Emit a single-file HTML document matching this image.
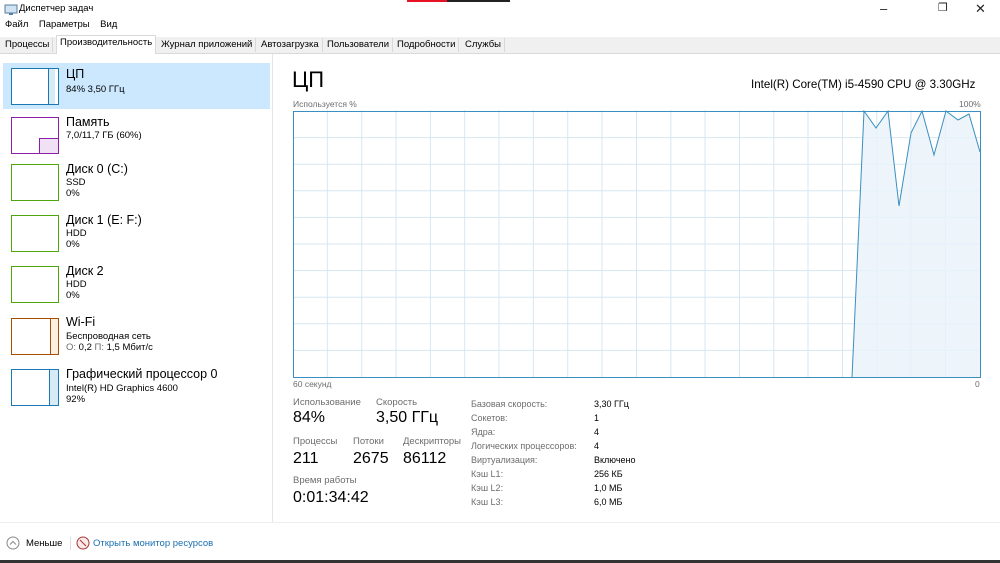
<!DOCTYPE html><html><head><meta charset="utf-8"><style>
body{margin:0;width:1000px;height:563px;overflow:hidden;background:#fff;font-family:"Segoe UI","Liberation Sans","DejaVu Sans",sans-serif;color:#000;position:relative}
.a{position:absolute;white-space:nowrap}
.s{font-size:9.5px}
.g{color:#6d6d6d}
.tab{position:absolute;top:38px;height:14px;font-size:9.5px;padding:0 3px;border-right:1px solid #d9d9d9;background:#f0f0f0;line-height:14px}
.th{position:absolute;left:11px;width:46px;height:35px;background:#fff}
.t1{font-size:12.5px}
</style></head><body>
<div class="a" style="left:407px;top:0;width:40px;height:2px;background:#e81123"></div>
<div class="a" style="left:447px;top:0;width:63px;height:2px;background:#222"></div>
<svg class="a" style="left:4px;top:4px" width="14" height="12"><rect x="1" y="1" width="12" height="8" fill="#cfe3f2" stroke="#5a7ea0"/><rect x="5" y="9" width="4" height="2" fill="#5a7ea0"/></svg>
<div class="a s" style="left:19px;top:3px">Диспетчер задач</div>
<div class="a s" style="left:5px;top:19px">Файл&nbsp;&nbsp;&nbsp;&nbsp;Параметры&nbsp;&nbsp;&nbsp;&nbsp;Вид</div>
<div class="a" style="left:880px;top:1px;font-size:13px;color:#222">&#8211;</div>
<div class="a" style="left:938px;top:1px;font-size:11px;color:#222">&#10064;</div>
<div class="a" style="left:975px;top:1px;font-size:13px;color:#222">&#10005;</div>
<div class="a" style="left:0;top:37px;width:1000px;height:16px;background:#f0f0f0;border-bottom:1px solid #d9d9d9"></div>
<div class="tab" style="left:2px">Процессы</div>
<div class="tab" style="left:56px;top:35px;height:18px;background:#fff;border:1px solid #d9d9d9;border-bottom:none">Производительность</div>
<div class="tab" style="left:158px">Журнал приложений</div>
<div class="tab" style="left:258px">Автозагрузка</div>
<div class="tab" style="left:324px">Пользователи</div>
<div class="tab" style="left:394px">Подробности</div>
<div class="tab" style="left:462px">Службы</div>
<div class="a" style="left:272px;top:54px;width:1px;height:468px;background:#e5e5e5"></div>
<div class="a" style="left:3px;top:63px;width:267px;height:46px;background:#cce8ff"></div>
<div class="th" style="top:68px;border:1px solid #1a79b5"><div class="a" style="right:3px;top:0;width:6px;height:35px;background:#d7ebf7;border-left:1px solid #1a79b5"></div></div>
<div class="a t1" style="left:66px;top:67px">ЦП</div><div class="a s" style="left:66px;top:84px">84% 3,50 ГГц</div>
<div class="th" style="top:117px;border:1px solid #8b1fa8"><div class="a" style="right:0;bottom:0;width:18px;height:14px;background:#f1e1f5;border-top:1px solid #8b1fa8;border-left:1px solid #8b1fa8"></div></div>
<div class="a t1" style="left:66px;top:115px">Память</div><div class="a s" style="left:66px;top:130px">7,0/11,7 ГБ (60%)</div>
<div class="th" style="top:164px;border:1px solid #4da60c"></div>
<div class="a t1" style="left:66px;top:162px">Диск 0 (C:)</div><div class="a s" style="left:66px;top:177px">SSD<br>0%</div>
<div class="th" style="top:215px;border:1px solid #4da60c"></div>
<div class="a t1" style="left:66px;top:213px">Диск 1 (E: F:)</div><div class="a s" style="left:66px;top:228px">HDD<br>0%</div>
<div class="th" style="top:266px;border:1px solid #4da60c"></div>
<div class="a t1" style="left:66px;top:264px">Диск 2</div><div class="a s" style="left:66px;top:279px">HDD<br>0%</div>
<div class="th" style="top:318px;border:1px solid #a74f01"><div class="a" style="right:0;top:0;width:7px;height:35px;background:#fbeee2;border-left:1px solid #a74f01"></div></div>
<div class="a t1" style="left:66px;top:315px">Wi-Fi</div><div class="a s" style="left:66px;top:331px">Беспроводная сеть<br><span class="g">О:</span> 0,2 <span class="g">П:</span> 1,5 Мбит/с</div>
<div class="th" style="top:369px;border:1px solid #1a79b5"><div class="a" style="right:0;top:0;width:8px;height:35px;background:#d7ebf7;border-left:1px solid #1a79b5"></div></div>
<div class="a t1" style="left:66px;top:367px">Графический процессор 0</div><div class="a s" style="left:66px;top:383px">Intel(R) HD Graphics 4600<br>92%</div>
<div class="a" style="left:292px;top:67px;font-size:22px">ЦП</div>
<div class="a" style="left:751px;top:78px;font-size:11.6px">Intel(R) Core(TM) i5-4590 CPU @ 3.30GHz</div>
<div class="a g" style="left:293px;top:99px;font-size:8.5px">Используется %</div>
<div class="a g" style="left:959px;top:99px;font-size:8.5px">100%</div>
<svg class="a" style="left:292px;top:110px" width="690" height="269">
<g stroke="#d6e7f1" stroke-width="1">
<path d="M35.3 0V268M69.7 0V268M104 0V268M138.4 0V268M172.7 0V268M207 0V268M241.4 0V268M275.7 0V268M310 0V268M344.5 0V268M378.8 0V268M413 0V268M447.5 0V268M481.8 0V268M516 0V268M550.5 0V268M584.8 0V268M619 0V268M653.5 0V268"/>
<path d="M1 27.6H688M1 54.2H688M1 80.8H688M1 107.4H688M1 134H688M1 160.6H688M1 187.2H688M1 213.8H688M1 240.4H688"/>
</g>
<path d="M560 268L572 1L584 18L596 1L607 96L619 23L630 1L642 45L654 1L666 10L677 4L688 42V268Z" fill="#e9f3fa" fill-opacity=".8"/>
<path d="M560 268L572 1L584 18L596 1L607 96L619 23L630 1L642 45L654 1L666 10L677 4L688 42" fill="none" stroke="#3a8fc0" stroke-width="1"/>
<rect x="1.5" y="1.5" width="687" height="266" fill="none" stroke="#3a8fc0"/>
</svg>
<div class="a g" style="left:293px;top:379px;font-size:8.5px">60 секунд</div>
<div class="a g" style="left:975px;top:379px;font-size:8.5px">0</div>
<div class="a g s" style="left:293px;top:397px">Использование</div>
<div class="a g s" style="left:376px;top:397px">Скорость</div>
<div class="a" style="left:293px;top:409px;font-size:16px">84%</div>
<div class="a" style="left:376px;top:409px;font-size:16px">3,50 ГГц</div>
<div class="a g s" style="left:293px;top:436px">Процессы</div>
<div class="a g s" style="left:353px;top:436px">Потоки</div>
<div class="a g s" style="left:403px;top:436px">Дескрипторы</div>
<div class="a" style="left:293px;top:450px;font-size:16px">211</div>
<div class="a" style="left:353px;top:450px;font-size:16px">2675</div>
<div class="a" style="left:403px;top:450px;font-size:16px">86112</div>
<div class="a g s" style="left:293px;top:475px">Время работы</div>
<div class="a" style="left:293px;top:489px;font-size:16px">0:01:34:42</div>
<div class="a g" style="left:471px;top:397px;font-size:9px;line-height:14px">Базовая скорость:<br>Сокетов:<br>Ядра:<br>Логических процессоров:<br>Виртуализация:<br>Кэш L1:<br>Кэш L2:<br>Кэш L3:</div>
<div class="a" style="left:594px;top:397px;font-size:9px;line-height:14px">3,30 ГГц<br>1<br>4<br>4<br>Включено<br>256 КБ<br>1,0 МБ<br>6,0 МБ</div>
<div class="a" style="left:0;top:522px;width:1000px;height:1px;background:#eee"></div>
<svg class="a" style="left:6px;top:536px" width="14" height="14"><circle cx="7" cy="7" r="6" fill="none" stroke="#888"/><path d="M4 8.5L7 5.5L10 8.5" fill="none" stroke="#888"/></svg>
<div class="a s" style="left:26px;top:538px">Меньше</div>
<div class="a" style="left:70px;top:537px;width:1px;height:13px;background:#ddd"></div>
<svg class="a" style="left:76px;top:536px" width="14" height="14"><circle cx="7" cy="7" r="6" fill="#f8eaea" stroke="#a33"/><path d="M4 4L10 10" stroke="#a33"/></svg>
<div class="a s" style="left:93px;top:538px;color:#1a6fb0">Открыть монитор ресурсов</div>
<div class="a" style="left:0;top:560px;width:1000px;height:3px;background:#333"></div>
</body></html>
